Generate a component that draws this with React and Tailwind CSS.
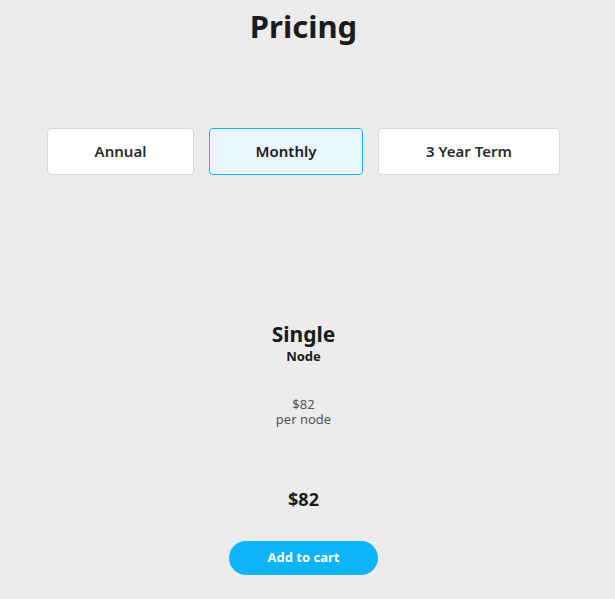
import React from "react";

export default function App() {
  const font = { fontFamily: '"Noto Sans", "Liberation Sans", sans-serif' };
  return (
    <div className="min-h-[599px] w-full bg-[#ececec] text-[#1b1b1b]" style={font}>
      <div className="w-[607px] flex flex-col items-center">
        <h1 className="mt-[4px] text-[31px] leading-[44px] font-bold">Pricing</h1>
        <div className="mt-[80px] flex gap-[15px]">
          <button className="h-[47px] w-[147px] rounded-[4px] border border-[#d9d9d9] bg-white text-[15px] font-semibold text-[#2b2b2b]">Annual</button>
          <button className="h-[47px] w-[154px] rounded-[4px] border border-[#14b4f5] bg-[#e9f6fe] text-[15px] font-semibold text-[#1b1b1b]">Monthly</button>
          <button className="h-[47px] w-[182px] rounded-[4px] border border-[#d9d9d9] bg-white text-[15px] font-semibold text-[#2b2b2b]">3 Year Term</button>
        </div>
        <div className="mt-[145px] flex flex-col items-center">
          <div className="text-[21px] leading-[28px] font-bold">Single</div>
          <div className="text-[13px] leading-[16px] font-bold">Node</div>
          <div className="mt-[33px] flex flex-col items-center text-[13px] leading-[15px] text-[#555]">
            <span>$82</span>
            <span>per node</span>
          </div>
          <div className="mt-[60px] text-[18px] leading-[24px] font-bold">$82</div>
          <button className="mt-[30px] h-[34px] w-[149px] rounded-full bg-[#0db4fb] text-[13px] font-bold text-white">Add to cart</button>
        </div>
      </div>
    </div>
  );
}
